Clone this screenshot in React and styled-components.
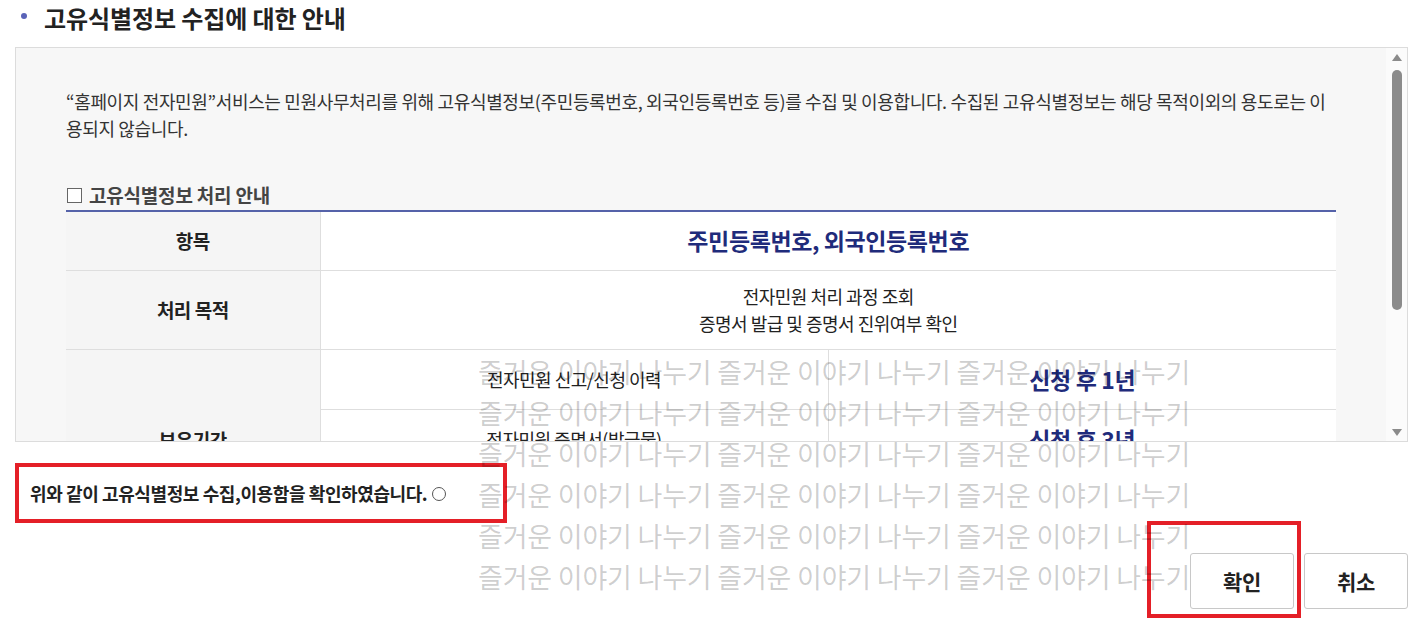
import React from 'react';
import styled, { createGlobalStyle } from 'styled-components';

const Global = createGlobalStyle`
  html, body { margin: 0; padding: 0; background: #fff; }
  body {
    font-family: "Noto Sans CJK KR", "Noto Sans", sans-serif;
    color: #222;
  }
  * { box-sizing: border-box; }
`;

const Page = styled.div`
  position: relative;
  height: 631px;
  overflow: hidden;
  padding: 0 20px 0 15px;
`;

const Title = styled.h2`
  margin: 0 0 11px;
  display: flex;
  align-items: center;
  gap: 17px;
  height: 36px;
  padding-left: 6px;
  font-size: 24px;
  font-weight: 700;
  letter-spacing: -0.1px;
  color: #222;
  line-height: 36px;
`;

const Dot = styled.span`
  width: 6px;
  height: 6px;
  border-radius: 50%;
  background: #5a63b8;
  margin-top: -5px;
`;

const ScrollBox = styled.div`
  height: 395px;
  border: 1px solid #dcdcdc;
  background: #f7f7f7;
  display: flex;
`;

const Viewport = styled.div`
  flex: 1;
  min-width: 0;
  overflow-y: auto;
  scrollbar-width: none;
  &::-webkit-scrollbar { display: none; }
`;

const Scrollbar = styled.div`
  width: 21px;
  flex: none;
  background: #fbfbfb;
  display: flex;
  flex-direction: column;
`;

const ArrowBtn = styled.div`
  height: 18px;
  display: flex;
  align-items: center;
  justify-content: center;
  padding-left: 1px;
`;

const Track = styled.div`
  flex: 1;
  padding-top: 4px;
  display: flex;
  justify-content: center;
  padding-left: 1px;
`;

const Thumb = styled.div`
  width: 10px;
  height: 240px;
  border-radius: 5px;
  background: #8b8b8b;
`;

const Content = styled.div`
  padding: 40px 50px 100px;
`;

const Para = styled.p`
  margin: 0;
  font-size: 18px;
  line-height: 27px;
  letter-spacing: -0.35px;
  color: #333;
`;

const SubHeading = styled.h3`
  margin: 41px 0 3px;
  font-size: 19px;
  line-height: 24px;
  font-weight: 700;
  color: #444;
  letter-spacing: -0.2px;
  display: flex;
  align-items: center;
  gap: 7px;
`;

const Square = styled.span`
  width: 15px;
  height: 15px;
  border: 1px solid #666;
  background: #fff;
  display: inline-block;
  margin-left: 1px;
`;

const Table = styled.table`
  width: 100%;
  border-collapse: collapse;
  border-top: 2px solid #5562a9;
  table-layout: fixed;
`;

const Th = styled.th`
  width: 20%;
  background: #f5f5f5;
  border-bottom: 1px solid #dedede;
  border-right: 1px solid #dedede;
  font-size: 19px;
  font-weight: 700;
  color: #222;
  letter-spacing: -0.5px;
  height: ${p => p.$h || 60}px;
`;

const Td = styled.td`
  background: #fff;
  border-bottom: 1px solid #dedede;
  border-left: ${p => (p.$divider ? '1px solid #dedede' : 'none')};
  text-align: center;
  font-size: ${p => (p.$big ? '23px' : '18px')};
  font-weight: ${p => (p.$big ? 700 : 400)};
  color: ${p => (p.$big ? '#1f2b7b' : '#222')};
  line-height: 27px;
  letter-spacing: ${p => (p.$big ? '-0.4px' : '-0.5px')};
  height: ${p => p.$h || 60}px;
`;

const ConfirmBox = styled.div`
  margin-top: 21px;
  width: 492px;
  height: 60px;
  border: 4px solid #e41f27;
  display: flex;
  align-items: center;
  padding-left: 11px;
  gap: 5px;
  font-size: 18px;
  font-weight: 700;
  letter-spacing: -0.4px;
  color: #222;
`;

const Radio = styled.input`
  appearance: none;
  width: 14px;
  height: 14px;
  margin: 2px 0 0;
  border: 1.5px solid #555;
  border-radius: 50%;
  background: #fff;
`;

const ButtonRow = styled.div`
  margin-top: 30px;
  display: flex;
  justify-content: flex-end;
  gap: 10px;
`;

const Highlight = styled.div`
  position: relative;
`;

const Marker = styled.span`
  position: absolute;
  left: -43px;
  top: -32px;
  width: 154px;
  height: 97px;
  border: 4px solid #e41f27;
  pointer-events: none;
`;

const Button = styled.button`
  width: 104px;
  height: 56px;
  border: 1px solid #c8c8c8;
  border-radius: 3px;
  background: #fff;
  font-family: inherit;
  font-size: 21px;
  font-weight: 700;
  color: #222;
  letter-spacing: -0.4px;
  cursor: pointer;
`;

const Watermark = styled.div`
  position: absolute;
  left: 478px;
  top: 351px;
  pointer-events: none;
  font-size: 27px;
  line-height: 41px;
  letter-spacing: -0.2px;
  color: rgba(0, 0, 0, 0.2);
  white-space: nowrap;
  z-index: 5;
`;

const Triangle = ({ down }) => (
  <svg width="10" height="7" viewBox="0 0 10 7" aria-hidden="true">
    <path d={down ? 'M0 0 H10 L5 7 Z' : 'M0 7 H10 L5 0 Z'} fill="#8b8b8b" />
  </svg>
);

const wmLine = '즐거운 이야기 나누기 즐거운 이야기 나누기 즐거운 이야기 나누기';

export default function App() {
  return (
    <Page>
      <Global />
      <Title>
        <Dot />
        고유식별정보 수집에 대한 안내
      </Title>
      <ScrollBox>
        <Viewport>
          <Content>
            <Para>
              “홈페이지 전자민원”서비스는 민원사무처리를 위해 고유식별정보(주민등록번호, 외국인등록번호 등)를 수집 및 이용합니다. 수집된 고유식별정보는 해당 목적이외의 용도로는 이용되지 않습니다.
            </Para>
            <SubHeading>
              <Square />
              고유식별정보 처리 안내
            </SubHeading>
            <Table>
              <tbody>
                <tr>
                  <Th $h={59}>항목</Th>
                  <Td colSpan={2} $big $h={59}>주민등록번호, 외국인등록번호</Td>
                </tr>
                <tr>
                  <Th $h={79}>처리 목적</Th>
                  <Td colSpan={2} $h={79}>
                    전자민원 처리 과정 조회
                    <br />
                    증명서 발급 및 증명서 진위여부 확인
                  </Td>
                </tr>
                <tr>
                  <Th rowSpan={3}>보유기간</Th>
                  <Td>전자민원 신고/신청 이력</Td>
                  <Td $big $divider>신청 후 1년</Td>
                </tr>
                <tr>
                  <Td>전자민원 증명서(발급물)</Td>
                  <Td $big $divider>신청 후 3년</Td>
                </tr>
                <tr>
                  <Td>전자민원 처리 결과</Td>
                  <Td $big $divider>신청 후 5년</Td>
                </tr>
              </tbody>
            </Table>
          </Content>
        </Viewport>
        <Scrollbar aria-hidden="true">
          <ArrowBtn><Triangle /></ArrowBtn>
          <Track><Thumb /></Track>
          <ArrowBtn><Triangle down /></ArrowBtn>
        </Scrollbar>
      </ScrollBox>
      <ConfirmBox>
        위와 같이 고유식별정보 수집,이용함을 확인하였습니다.
        <Radio type="radio" name="agree" aria-label="확인" />
      </ConfirmBox>
      <ButtonRow>
        <Highlight>
          <Button type="button">확인</Button>
          <Marker />
        </Highlight>
        <Button type="button">취소</Button>
      </ButtonRow>
      <Watermark>
        {Array.from({ length: 6 }).map((_, i) => (
          <div key={i}>{wmLine}</div>
        ))}
      </Watermark>
    </Page>
  );
}
